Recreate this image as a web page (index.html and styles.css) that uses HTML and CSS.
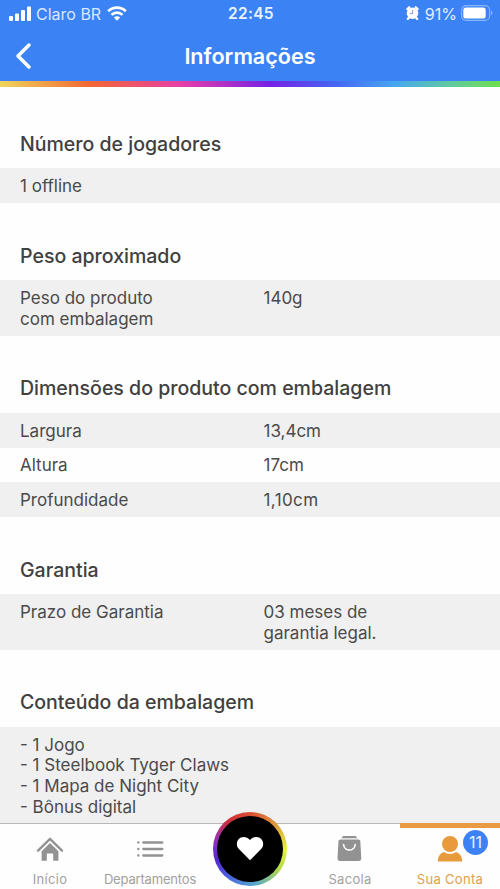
FILE: index.html
```
<!DOCTYPE html>
<html lang="pt-BR">
<head>
<meta charset="utf-8">
<title>Informações</title>
<link rel="stylesheet" href="styles.css">
</head>
<body>
<div class="app">
  <header class="header">
    <div class="status">
      <div class="carrier">
        <svg class="signal" width="22" height="15" viewBox="0 0 22 15" fill="#fff"><rect x="0" y="10" width="4" height="5" rx="1"/><rect x="6" y="7.5" width="4" height="7.5" rx="1"/><rect x="12" y="4" width="4" height="11" rx="1"/><rect x="18" y="0.5" width="4" height="14.5" rx="1"/></svg>
        <span class="carrier-name">Claro BR</span>
        <svg class="wifi" width="20" height="15" viewBox="0 0 20 15" fill="none" stroke="#fff" stroke-width="2.7"><path d="M1.2 5.2a12.6 12.6 0 0 1 17.6 0"/><path d="M4.5 8.9a7.8 7.8 0 0 1 11 0"/><path d="M6.9 11.5a4.4 4.4 0 0 1 6.2 0L10 14.7z" fill="#fff" stroke="none"/></svg>
      </div>
      <span class="clock">22:45</span>
      <div class="power">
        <svg class="alarm" width="13" height="14" viewBox="0 0 13 14"><path d="M1.3 3.1 3.3 1.2M11.7 3.1 9.7 1.2M2.8 11.8l-1 1.2M10.2 11.8l1 1.2" stroke="#fff" stroke-width="2.2" stroke-linecap="round"/><circle cx="6.5" cy="7.2" r="5.8" fill="#fff"/><path d="M6.6 4v3.6H3.8" fill="none" stroke="#8795d5" stroke-width="1"/></svg>
        <span class="percent">91%</span>
        <svg class="battery" width="32" height="16" viewBox="0 0 32 16"><rect x=".6" y=".6" width="28" height="14.8" rx="4.5" fill="none" stroke="#87b5fa" stroke-width="1.1"/><rect x="2.3" y="2.5" width="22.4" height="11" rx="2.5" fill="#fff"/><path d="M30 5.5q3 2.5 0 5z" fill="#87b5fa"/></svg>
      </div>
    </div>
    <div class="titlebar">
      <svg class="back" width="18" height="28" viewBox="0 0 18 28" fill="none" stroke="#fff" stroke-width="3.5" stroke-linecap="round" stroke-linejoin="round"><path d="M15 3 4 14 15 25"/></svg>
      <h1 class="title">Informações</h1>
    </div>
    <div class="rainbow"></div>
  </header>
  <main class="content">
    <section>
      <h2>Número de jogadores</h2>
      <div class="row"><span>1 offline</span></div>
    </section>
    <section>
      <h2>Peso aproximado</h2>
      <div class="row"><span>Peso do produto<br>com embalagem</span><span>140g</span></div>
    </section>
    <section>
      <h2>Dimensões do produto com embalagem</h2>
      <div class="row"><span>Largura</span><span>13,4cm</span></div>
      <div class="row plain"><span>Altura</span><span>17cm</span></div>
      <div class="row"><span>Profundidade</span><span class="wide">1,10cm</span></div>
    </section>
    <section>
      <h2>Garantia</h2>
      <div class="row"><span>Prazo de Garantia</span><span>03 meses de<br>garantia legal.</span></div>
    </section>
    <section>
      <h2>Conteúdo da embalagem</h2>
      <div class="row last"><span>- 1 Jogo<br>- 1 Steelbook Tyger Claws<br>- 1 Mapa de Night City<br>- Bônus digital</span></div>
    </section>
  </main>
  <nav class="tabs">
    <div class="tab">
      <svg width="28" height="26" viewBox="0 0 28 26"><path d="M2 14.6 14 3l12 11.6" fill="none" stroke="#929292" stroke-width="2.4" stroke-linecap="round"/><path d="M5.6 15.2 14 7l8.4 8.2v9.6h-5.2v-7.3h-6.4v7.3H5.6z" fill="#929292"/></svg>
      <span>Início</span>
    </div>
    <div class="tab dense">
      <svg width="28" height="26" viewBox="0 0 28 26" stroke="#929292" stroke-width="2.3" stroke-linecap="round"><path d="M7.3 6.5h19M7.3 13h19M7.3 19.5h19M2.2 6.5h.2M2.2 13h.2M2.2 19.5h.2"/></svg>
      <span>Departamentos</span>
    </div>
    <div class="tab">
      <div class="heart"><div class="disc"><svg class="love" width="28" height="25" viewBox="0 0 28 25"><path d="M14 24.2 2.7 12.8C.3 10.2.2 5.8 2.6 3.2c2.8-3 8.1-2.9 11.4.8 3.3-3.7 8.6-3.8 11.4-.8 2.4 2.6 2.3 7-.1 9.6z" fill="#fff"/></svg></div></div>
    </div>
    <div class="tab">
      <svg width="28" height="26" viewBox="0 0 28 26"><path d="M7.2 0h12.4l1.8 2.3H5.4z" fill="#929292"/><path d="M4.2 3.6h18.4q1.5 0 1.7 1.5l1 17.5q0 2.4-2.2 2.4H3.7q-2.2 0-2.2-2.4l1-17.5q.1-1.5 1.7-1.5z" fill="#929292"/><path d="M7.6 8.5c.6 7.4 11 7.4 11.6 0" fill="none" stroke="#fff" stroke-width="1.6" stroke-linecap="round"/></svg>
      <span>Sacola</span>
    </div>
    <div class="tab active">
      <svg width="28" height="26" viewBox="0 0 28 26" fill="#e99a3c"><circle cx="14" cy="8" r="8"/><path d="M1.8 25.4c0-5.1 2.5-8.4 6.3-9.5 3.3 2.5 8.5 2.5 11.8 0 3.8 1.1 6.3 4.4 6.3 9.5z"/></svg>
      <span>Sua Conta</span>
      <b class="badge">11</b>
    </div>
  </nav>
</div>
</body>
</html>
```
FILE: styles.css
```
* { box-sizing: border-box; }
body { margin: 0; font-family: Inter, "Liberation Sans", sans-serif; color: #4a4a4a; background: #fefefe; }
svg { display: block; flex: none; }
.app { height: 889px; display: flex; flex-direction: column; overflow: hidden; }
.header { flex: none; height: 87px; background: #3b83f5; color: #fff; display: flex; flex-direction: column; }
.status { height: 28px; display: grid; grid-template-columns: 1fr auto 1fr; align-items: center; padding: 0 7px 0 9px; font-size: 16px; line-height: 20px; }
.carrier, .power { display: flex; align-items: center; }
.signal { margin-top: -2px; }
.carrier-name { margin-left: 5px; color: #d9e8ff; }
.wifi { margin: -2px 0 0 6px; }
.clock { font-weight: 600; font-size: 15.5px; letter-spacing: .3px; color: #e9f2ff; }
.power { justify-content: flex-end; }
.alarm { margin-top: -2px; }
.percent { margin: 0 4px 0 6px; color: #e3eeff; }
.battery { margin-top: -2px; }
.titlebar { height: 53px; display: grid; grid-template-columns: 60px 1fr 60px; align-items: center; }
.back { margin-left: 14px; margin-top: 2px; }
.title { margin: 2px 0 0; text-align: center; font-size: 21.6px; line-height: 28px; font-weight: 600; }
.rainbow { height: 6px; background: linear-gradient(90deg, #f0d55b 0%, #f16732 18%, #e83fa5 36%, #7621e5 54%, #4565f3 67%, #46a7ef 79%, #5fca9f 90%, #6edf4c 100%); }
.content { flex: 1; min-height: 0; overflow: hidden; padding-top: 4px; }
h2 { margin: 0; padding: 40.6px 20px 12.7px; font-size: 19.55px; line-height: 24px; font-weight: 500; color: #404040; white-space: nowrap; }
.row { display: grid; grid-template-columns: 243.5px 1fr; padding: 7.7px 20px 6.3px; font-size: 17px; line-height: 20.7px; background: #f0f0f0; white-space: nowrap; }
.row.plain { background: none; }
.row.last { padding-bottom: 40px; }
.wide { letter-spacing: .4px; }
.tabs { flex: none; height: 66px; display: grid; grid-template-columns: repeat(5, 1fr); border-top: 1px solid #b8b8b8; background: #fefefe; }
.tab { position: relative; display: flex; flex-direction: column; align-items: center; padding-top: 12px; font-size: 13px; line-height: 18px; letter-spacing: .3px; color: #a1a1a1; white-space: nowrap; }
.tab > span { margin-top: 8px; }
.tab.dense { letter-spacing: -.18px; }
.tab.active { color: #dfa04e; }
.tab.active::before { content: ""; position: absolute; left: 0; right: 0; top: -1px; height: 5px; background: #e89b40; }
.heart { position: absolute; left: 13px; top: -12px; width: 74px; height: 74px; padding: 4px; border-radius: 50%; background: conic-gradient(#dc4e34, #df943d 12%, #e6f13d 25%, #b5dc45 34%, #57a7ce 48%, #4a6bdd 59%, #5727d5 70%, #9a32b1 80%, #cc2e3c 89%, #dc4e34); }
.disc { height: 100%; border-radius: 50%; background: #000; display: flex; align-items: center; justify-content: center; }
.love { margin-top: -1px; }
.badge { position: absolute; left: 63px; top: 6px; width: 25px; height: 25px; border-radius: 50%; background: #3c82f5; color: #e9f2ff; font-size: 16px; line-height: 25px; font-weight: 400; text-align: center; letter-spacing: 0; }
```
